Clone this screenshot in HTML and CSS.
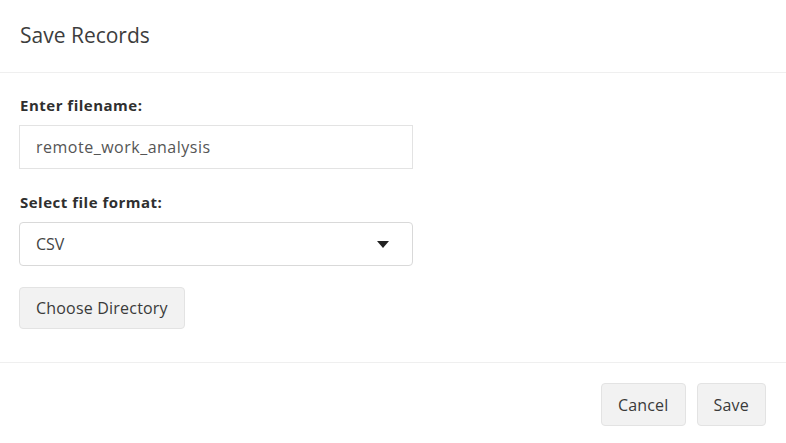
FILE: index.html
```html
<!DOCTYPE html>
<html>
<head>
<meta charset="utf-8">
<link rel="stylesheet" href="styles.css">
</head>
<body>
<div class="modal">
  <div class="modal-header">
    <h4 class="modal-title">Save Records</h4>
  </div>
  <div class="modal-body">
    <div class="form-group">
      <label class="control-label">Enter filename:</label>
      <input class="form-control" type="text" value="remote_work_analysis">
    </div>
    <div class="form-group">
      <label class="control-label">Select file format:</label>
      <div class="select">
        <span>CSV</span>
        <svg class="caret" width="12" height="7" viewBox="0 0 12 7"><path d="M0 0H12L6 7Z" fill="#222"/></svg>
      </div>
    </div>
    <button class="btn">Choose Directory</button>
  </div>
  <div class="modal-footer">
    <button class="btn">Cancel</button>
    <button class="btn">Save</button>
  </div>
</div>
</body>
</html>
```
FILE: styles.css
```css
html, body {
  margin: 0;
  padding: 0;
  background: #fff;
}
body {
  font-family: "Open Sans", "Source Sans Pro", "Liberation Sans", sans-serif;
  color: #333;
  width: 786px;
  height: 443px;
  overflow: hidden;
}
.modal-header {
  height: 73px;
  box-sizing: border-box;
  padding: 0 20px;
  display: flex;
  align-items: center;
  border-bottom: 1px solid #efefef;
}
.modal-title {
  margin: 0;
  font-size: 21px;
  font-weight: 400;
  color: #3d3d3d;
  padding-bottom: 2px;
}
.modal-body {
  padding: 20px 20px 33px 19px;
  border-bottom: 1px solid #efefef;
}
.form-group {
  display: flex;
  flex-direction: column;
  margin-bottom: 21px;
}
.control-label {
  font-weight: 700;
  font-size: 15px;
  letter-spacing: 0.5px;
  line-height: 24px;
  margin: 0 0 8px 1px;
  color: #2f2f2f;
}
.form-control {
  width: 394px;
  height: 44px;
  box-sizing: border-box;
  border: 1px solid #e3e3e3;
  border-radius: 0;
  padding: 0 16px;
  font-family: inherit;
  font-size: 16px;
  letter-spacing: 0.5px;
  color: #555;
  outline: none;
}
.select {
  width: 394px;
  height: 44px;
  box-sizing: border-box;
  border: 1px solid #d9d9d9;
  border-radius: 4px;
  padding: 0 23px 0 16px;
  display: flex;
  align-items: center;
  justify-content: space-between;
  font-size: 16px;
  color: #444;
}
.caret {
  display: block;
}
.btn {
  font-family: inherit;
  font-size: 16px;
  letter-spacing: 0.2px;
  color: #3a3a3a;
  background: #f2f2f2;
  border: 1px solid #e3e3e3;
  border-radius: 4px;
  height: 43px;
  padding: 0 16px;
  cursor: pointer;
}
.modal-body .btn {
  height: 42px;
}
.modal-footer {
  display: flex;
  justify-content: flex-end;
  gap: 11px;
  padding: 20px 20px 0 20px;
}
```
